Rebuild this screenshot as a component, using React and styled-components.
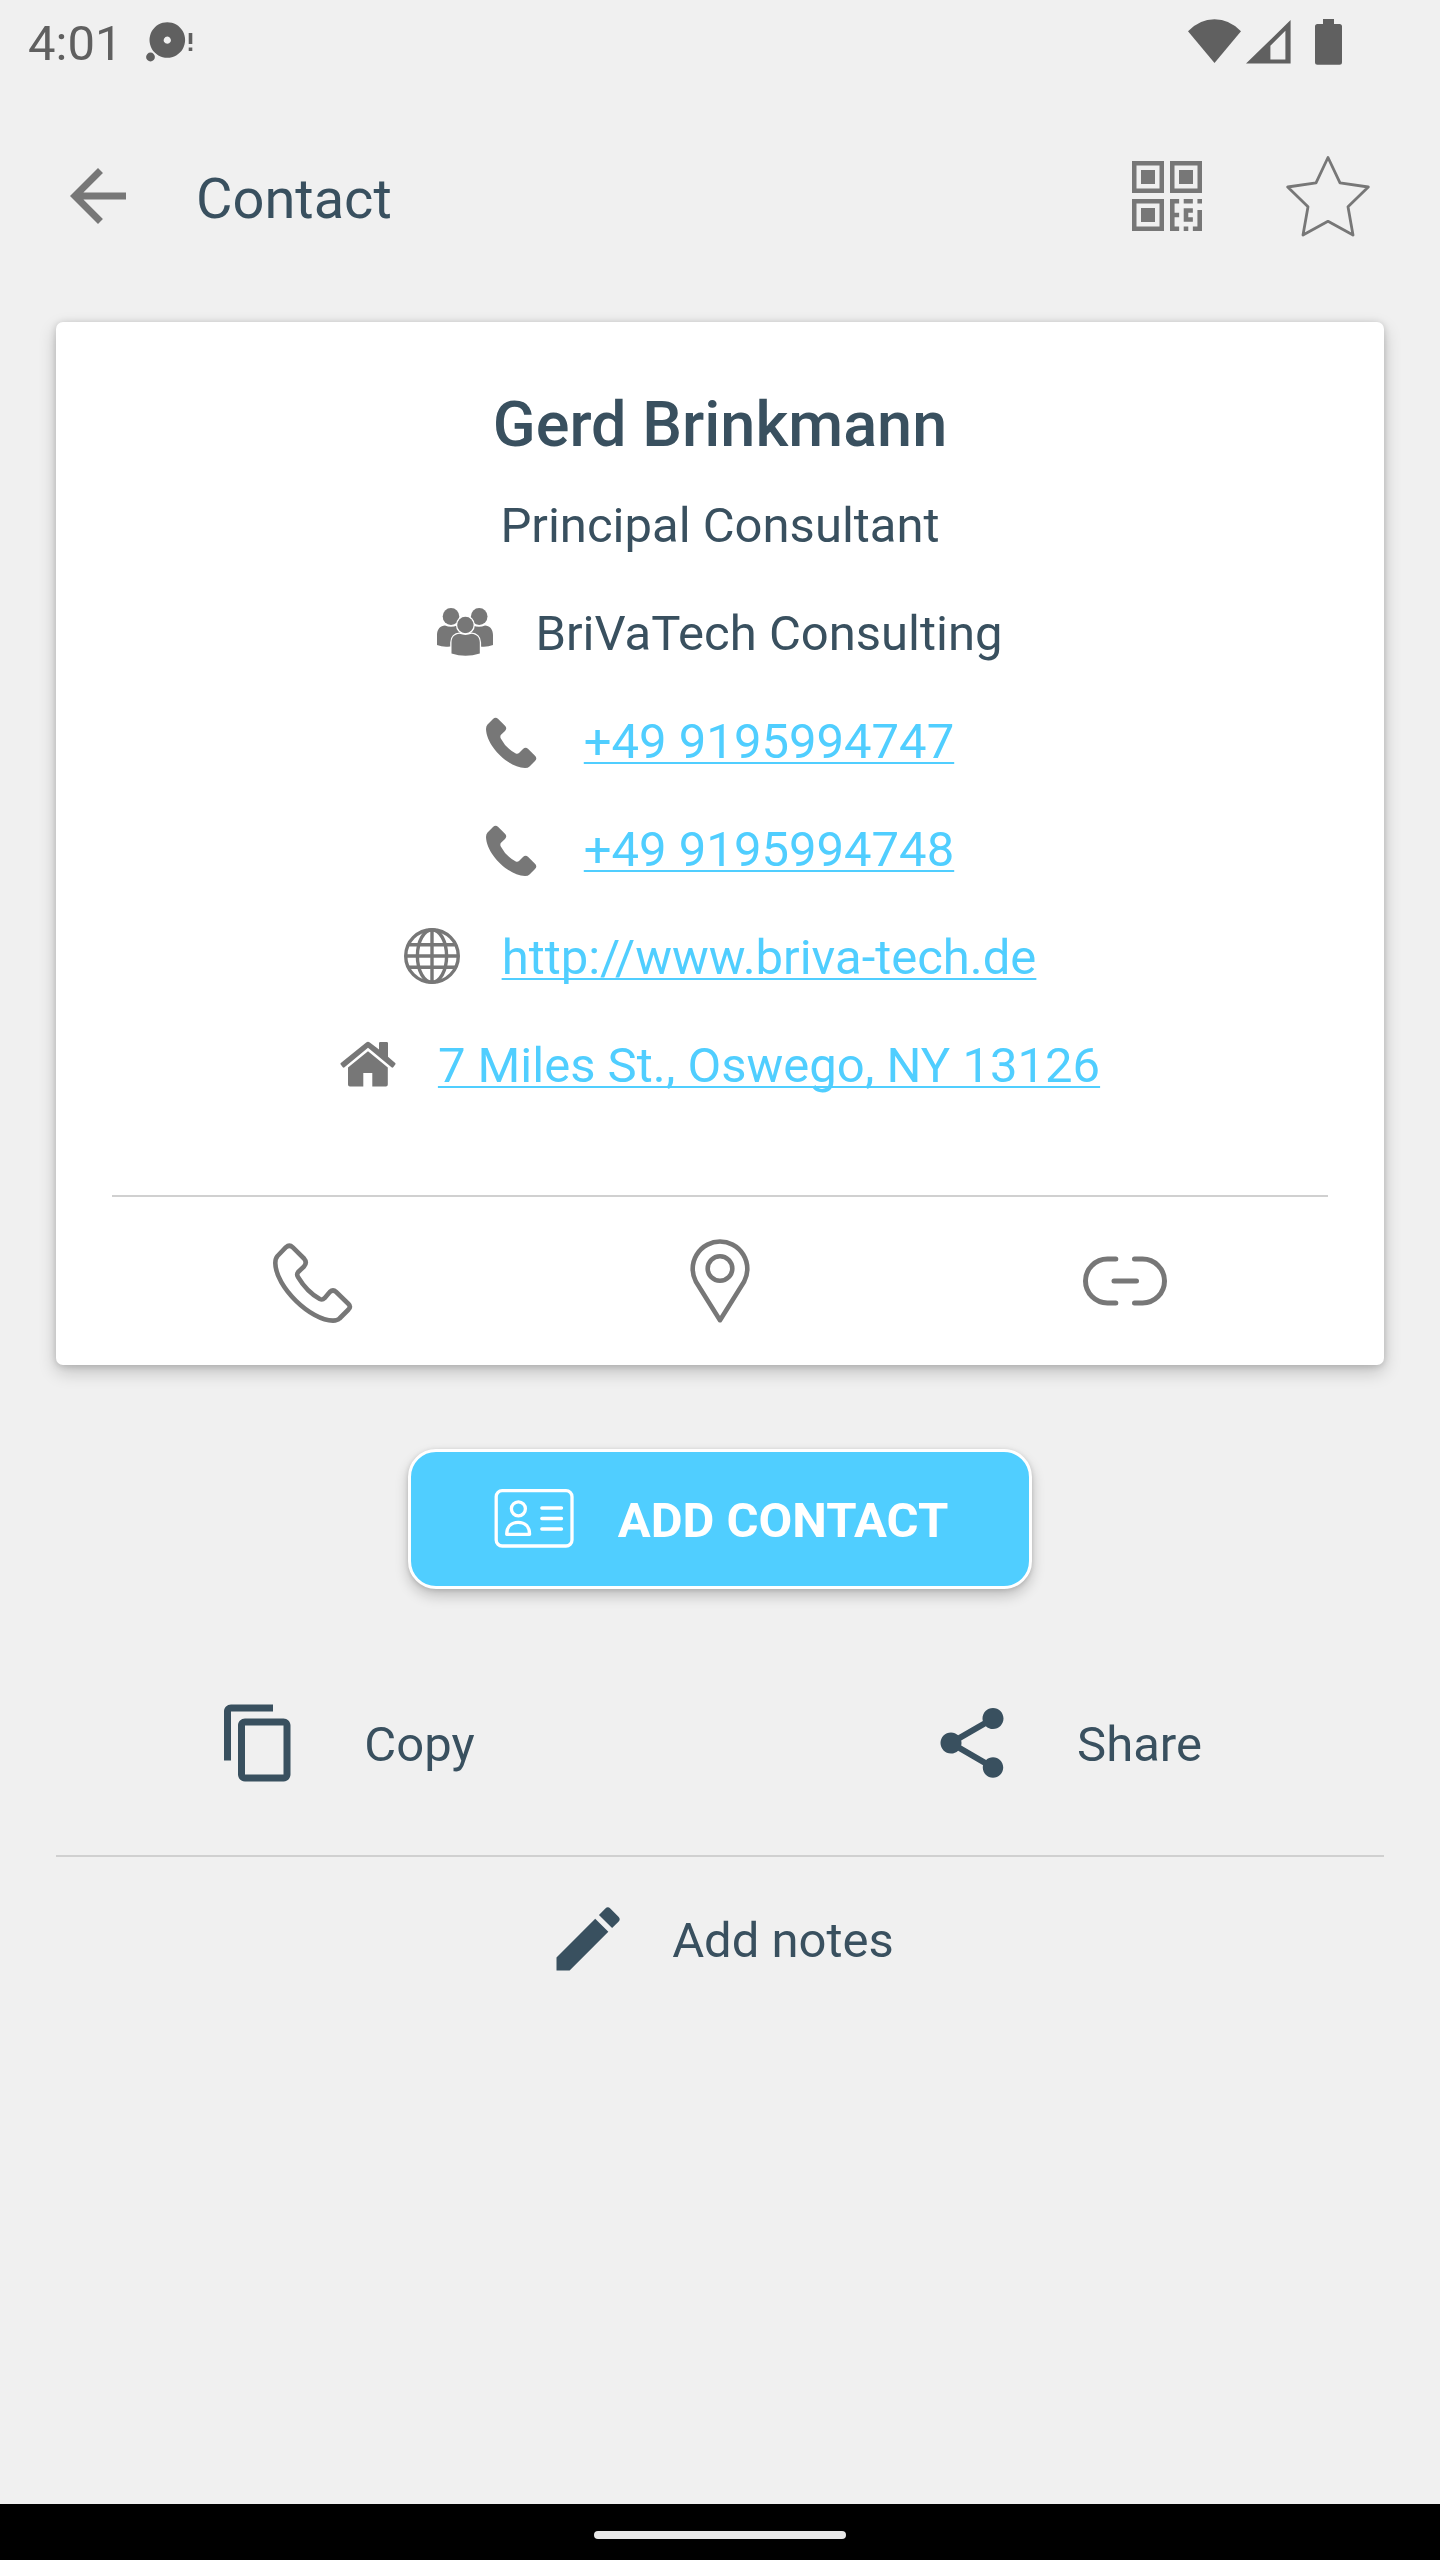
import React from "react";
import styled, { createGlobalStyle } from "styled-components";
import { MdArrowBack, MdContentCopy, MdEdit, MdShare } from "react-icons/md";

const ink = "#39505f";
const grey = "#777777";
const sky = "#50ceff";
const line = "#d0d0d0";

const GlobalStyle = createGlobalStyle`
  *, *::before, *::after { box-sizing: border-box; }
  body {
    margin: 0;
    background: #f0f0f0;
    color: ${ink};
    font-family: Roboto, "Liberation Sans", sans-serif;
    font-size: 49px;
  }
  svg { display: block; flex: none; }
  button { font: inherit; color: inherit; border: 0; background: none; padding: 0; cursor: pointer; }
`;

const Page = styled.div`
  display: flex;
  flex-direction: column;
  min-height: 100vh;
`;

const StatusBar = styled.div`
  display: flex;
  align-items: center;
  justify-content: space-between;
  height: 84px;
  padding: 0 98px 0 28px;
  color: #606060;
`;

const StatusGroup = styled.div`
  display: flex;
  align-items: center;
  gap: ${(p) => p.$gap}px;
`;

const Label = styled.span`
  padding-top: 4px;
  line-height: 60px;
  white-space: nowrap;
`;

const Toolbar = styled.header`
  display: flex;
  align-items: center;
  height: 224px;
  padding: 0 70px 0 56px;
`;

const Title = styled.h1`
  flex: 1;
  margin: 0 0 0 56px;
  padding-top: 6px;
  font-size: 56px;
  line-height: 64px;
  font-weight: 400;
`;

const ToolbarActions = styled.div`
  display: flex;
  gap: 77px;
`;

const IconButton = styled.button`
  display: grid;
  place-items: center;
  width: 84px;
  height: 84px;
  color: ${grey};
`;

const Card = styled.section`
  margin: 14px 56px 0;
  padding: 50px 56px 0;
  background: #ffffff;
  border-radius: 7px;
  box-shadow: 0 7px 18px rgba(0, 0, 0, 0.2), 0 1px 7px rgba(0, 0, 0, 0.16);
`;

const Name = styled.h2`
  margin: 0;
  padding-top: 8px;
  font-size: 63px;
  line-height: 90px;
  font-weight: 500;
  text-align: center;
`;

const Details = styled.ul`
  list-style: none;
  margin: 0 0 77px;
  padding: 0;
`;

const Detail = styled.li`
  display: flex;
  align-items: center;
  justify-content: center;
  gap: 42px;
  height: 108px;
  color: ${grey};
`;

const DetailText = styled(Label)`
  color: ${ink};
`;

const DetailLink = styled.a`
  padding-top: 4px;
  line-height: 60px;
  white-space: nowrap;
  color: ${sky};
  text-decoration: underline;
  text-decoration-thickness: 2px;
  text-underline-offset: 4px;
  text-decoration-skip-ink: none;
`;

const Divider = styled.hr`
  height: 2px;
  margin: 0 ${(p) => p.$inset}px;
  border: 0;
  background: ${line};
`;

const CardActions = styled.div`
  display: grid;
  grid-template-columns: repeat(3, 1fr);
  align-items: center;
  justify-items: center;
  height: 168px;
`;

const AddContact = styled.button`
  && {
    display: flex;
    align-items: center;
    align-self: center;
    gap: 42px;
    height: 140px;
    margin-top: 84px;
    padding: 0 81px;
    border: 3px solid #ffffff;
    border-radius: 28px;
    background: ${sky};
    color: #ffffff;
    font-weight: 700;
    box-shadow: 0 7px 14px rgba(0, 0, 0, 0.2), 0 1px 5px rgba(0, 0, 0, 0.14);
  }
`;

const ShareRow = styled.div`
  display: grid;
  grid-template-columns: repeat(2, 1fr);
  height: 224px;
  margin-top: 42px;
`;

const TextButton = styled.button`
  && {
    display: flex;
    align-items: center;
    justify-content: center;
    gap: ${(p) => p.$gap}px;
    min-height: 164px;
    padding-right: ${(p) => p.$endSpace || 0}px;
  }
`;

const NavBar = styled.footer`
  display: grid;
  place-items: center;
  height: 56px;
  margin-top: auto;
  padding-top: 6px;
  background: #000000;
`;

const HomeHandle = styled.div`
  width: 252px;
  height: 8px;
  border-radius: 4px;
  background: #e8e8e8;
`;

const DiscIcon = () => (
  <svg width="48" height="44" viewBox="146 20 48 44" fill="currentColor" aria-hidden="true">
    <path fillRule="evenodd" d="M167.300 22.200a17.800 17.800 0 1 0 .01 0zM167.300 36.600a3.600 3.600 0 1 1-.01 0z" />
    <circle cx="150.500" cy="57" r="4.400" />
    <path d="M188.700 33h3.600v11h-3.600zM188.700 47.500h3.600v3.600h-3.600z" />
  </svg>
);

const WifiIcon = () => (
  <svg width="53" height="46" viewBox="0 0 53 46" fill="currentColor" aria-hidden="true">
    <path d="M0 12.200Q11.500.2 26.500.2T53 12.200L26.500 44z" />
  </svg>
);

const SignalIcon = () => (
  <svg width="46" height="46" viewBox="0 0 46 46" fill="currentColor" aria-hidden="true">
    <path fillRule="evenodd" d="M0 44.600L44.600 1v43.600zM24.400 26.700v13.700h15V11.700z" />
  </svg>
);

const BatteryIcon = () => (
  <svg width="27" height="46" viewBox="0 0 27 46" fill="currentColor" aria-hidden="true">
    <path d="M8 0h11v5h5.500a2.500 2.500 0 0 1 2.500 2.500v35.700a2.500 2.500 0 0 1-2.500 2.500h-22a2.500 2.500 0 0 1-2.500-2.500V7.500A2.500 2.500 0 0 1 2.500 5H8z" />
  </svg>
);

const Finder = ({ x, y }) => (
  <path fillRule="evenodd" d={`M${x} ${y}h32v32h-32zM${x + 4.5} ${y + 4.5}v23h23v-23zM${x + 9} ${y + 9}h14v14h-14z`} />
);

const QrIcon = () => (
  <svg width="70" height="70" viewBox="0 0 70 70" fill="currentColor" aria-hidden="true">
    <Finder x={0} y={0} />
    <Finder x={38} y={0} />
    <Finder x={0} y={38} />
    <g transform="translate(38 38) scale(4.571)">
      <path d="M0 0h2v1H1v2h1v1H1v2h1v1H0zM3 0h2v1H3zM6 0h1v1H6zM3 2h2v1H4v1h1v1H3zM3 6h1v1H3zM6 2.400h1V7H5V6h1z" />
    </g>
  </svg>
);

const StarIcon = () => (
  <svg width="84" height="84" viewBox="0 0 84 84" fill="none" stroke="currentColor" strokeWidth="2.800" strokeLinejoin="round" aria-hidden="true">
    <path d="M42 3.500L54 28.900L82.300 33L62 52.700L67 81L42 67.300L17 81L22 52.700L1.700 33L30 28.900z" />
  </svg>
);

const GroupIcon = () => (
  <svg width="56" height="56" viewBox="0 0 56 56" fill="currentColor" aria-hidden="true">
    <ellipse cx="14" cy="12.600" rx="8.300" ry="8.500" />
    <ellipse cx="42.200" cy="12.600" rx="8.300" ry="8.500" />
    <path d="M0 41V31C0 25 3.500 21.700 8 21.500Q14 24 20 21.500H36Q42 24 48 21.500C52.500 21.700 56 25 56 31V41Q50 43.500 43 42.500H13Q6 43.500 0 41z" />
    <g stroke="#ffffff" strokeWidth="2.600" paintOrder="stroke">
      <circle cx="28.400" cy="21" r="8.200" />
      <path d="M14.500 49.500V38.500C14.500 33 18 30 22.500 29.800Q28.500 32 34.500 29.800C39 30 42.800 33 42.800 38.500V49.500Q28.500 54 14.500 49.500z" />
    </g>
  </svg>
);

const PhoneIcon = () => (
  <svg width="56" height="56" viewBox="0 0 56 56" fill="currentColor" aria-hidden="true">
    <path d="M1.500 12.500L7 7Q9.600 4.400 12.200 7L19 13.800Q21.500 16.300 19 18.900L15 22.800Q13.800 24.300 14.800 26.500Q20 36.500 29.800 41.500Q31.600 42.200 33 41L37 37Q39.600 34.500 42.200 37L49 43.800Q51.600 46.400 49 49L43.500 54.500Q42 56 39 56C22 55.500 .5 34 0 17Q0 14 1.500 12.500z" />
  </svg>
);

const GlobeIcon = () => (
  <svg width="56" height="56" viewBox="0 0 56 56" fill="none" stroke="currentColor" strokeWidth="3.400" aria-hidden="true">
    <circle cx="28" cy="28" r="26.300" />
    <ellipse cx="28" cy="28" rx="14.600" ry="26.300" />
    <path d="M28 2v52M2 28h52M5 16.700h46M5 39.200h46" />
  </svg>
);

const HomeIcon = () => (
  <svg width="56" height="56" viewBox="0 0 56 56" fill="currentColor" aria-hidden="true">
    <path d="M26.200 6.400Q28 5 29.800 6.400L39 13.600V7.200Q39 6 40.200 6H46.800Q48 6 48 7.200V20.700L55.200 27Q56 27.800 55.300 28.600L53.200 31.200Q52.400 32 51.500 31.300L28 11.700L4.500 31.300Q3.600 32 2.800 31.200L.7 28.600Q0 27.800 .8 27z" />
    <path d="M28 15.300L47.800 31.400V48.600Q47.800 50.500 45.900 50.500H32.300V37H23.300V50.500H9.900Q8 50.500 8 48.600V31.400z" />
  </svg>
);

const CallIcon = () => (
  <svg width="84" height="84" viewBox="0 0 84 84" fill="none" stroke="currentColor" strokeWidth="4.600" strokeLinejoin="round" aria-hidden="true">
    <path d="M4.500 17L13 8.200Q16.400 5.200 19.800 8.400L31 19.500Q34.500 23.500 31 27.500L25.200 33Q23.300 35.300 25 38Q34 53 46.800 60Q49.400 61.300 51.500 59.200L56.800 53Q60 50 63.200 53L75.500 65Q78.200 67.600 75.500 70.500L66.500 79.500Q64.500 81.600 60 81.600C38 81.600 2.500 48 2.300 24Q2.300 19.500 4.500 17z" />
  </svg>
);

const PinIcon = () => (
  <svg width="84" height="84" viewBox="0 0 84 84" fill="none" stroke="currentColor" strokeWidth="4.600" strokeLinejoin="round" aria-hidden="true">
    <path d="M42 81.200L17.800 42.500A27.300 27.300 0 1 1 66.200 42.500z" />
    <circle cx="42" cy="29.500" r="12.300" />
  </svg>
);

const LinkIcon = () => (
  <svg width="84" height="84" viewBox="0 0 84 84" fill="none" stroke="currentColor" strokeWidth="5" strokeLinecap="round" aria-hidden="true">
    <path d="M32.800 20H24.500A22 22 0 0 0 24.500 64H32.800M51.500 20H59.500A22 22 0 0 1 59.500 64H51.500M31 42H53.500" />
  </svg>
);

const IdCardIcon = () => (
  <svg width="84" height="84" viewBox="0 0 84 84" fill="none" stroke="currentColor" strokeWidth="3.300" strokeLinejoin="round" strokeLinecap="round" aria-hidden="true">
    <rect x="4.200" y="13.700" width="75.800" height="55.300" rx="6" />
    <circle cx="26.400" cy="31.800" r="7" />
    <path d="M14.700 57.300C14.700 49.500 19.500 45.300 26.200 45.300S37.600 49.500 37.600 57.300z" />
    <path d="M49.800 31H69.500M49.800 41.500H69.500M49.800 52H69.500" />
  </svg>
);

export default function App() {
  return (
    <>
      <GlobalStyle />
      <Page>
        <StatusBar>
          <StatusGroup $gap={24}>
            <Label>4:01</Label>
            <DiscIcon />
          </StatusGroup>
          <StatusGroup $gap={23}>
            <StatusGroup $gap={5}>
              <WifiIcon />
              <SignalIcon />
            </StatusGroup>
            <BatteryIcon />
          </StatusGroup>
        </StatusBar>

        <Toolbar>
          <IconButton aria-label="Back">
            <MdArrowBack size={84} />
          </IconButton>
          <Title>Contact</Title>
          <ToolbarActions>
            <IconButton aria-label="Show QR code">
              <QrIcon />
            </IconButton>
            <IconButton aria-label="Favourite">
              <StarIcon />
            </IconButton>
          </ToolbarActions>
        </Toolbar>

        <Card>
          <Name>Gerd Brinkmann</Name>
          <Details>
            <Detail>
              <DetailText>Principal Consultant</DetailText>
            </Detail>
            <Detail>
              <GroupIcon />
              <DetailText>BriVaTech Consulting</DetailText>
            </Detail>
            <Detail>
              <PhoneIcon />
              <DetailLink href="tel:+499195994747">+49 9195994747</DetailLink>
            </Detail>
            <Detail>
              <PhoneIcon />
              <DetailLink href="tel:+499195994748">+49 9195994748</DetailLink>
            </Detail>
            <Detail>
              <GlobeIcon />
              <DetailLink href="http://www.briva-tech.de">http://www.briva-tech.de</DetailLink>
            </Detail>
            <Detail>
              <HomeIcon />
              <DetailLink href="geo:0,0?q=7+Miles+St.,+Oswego,+NY+13126">7 Miles St., Oswego, NY 13126</DetailLink>
            </Detail>
          </Details>
          <Divider $inset={0} />
          <CardActions>
            <IconButton aria-label="Call">
              <CallIcon />
            </IconButton>
            <IconButton aria-label="Show on map">
              <PinIcon />
            </IconButton>
            <IconButton aria-label="Open link">
              <LinkIcon />
            </IconButton>
          </CardActions>
        </Card>

        <AddContact>
          <IdCardIcon />
          <Label>ADD CONTACT</Label>
        </AddContact>

        <ShareRow>
          <TextButton $gap={63} $endSpace={28}>
            <MdContentCopy size={84} />
            <Label>Copy</Label>
          </TextButton>
          <TextButton $gap={63} $endSpace={28}>
            <MdShare size={84} />
            <Label>Share</Label>
          </TextButton>
        </ShareRow>
        <Divider $inset={56} />
        <TextButton $gap={42}>
          <MdEdit size={84} />
          <Label>Add notes</Label>
        </TextButton>

        <NavBar>
          <HomeHandle />
        </NavBar>
      </Page>
    </>
  );
}
